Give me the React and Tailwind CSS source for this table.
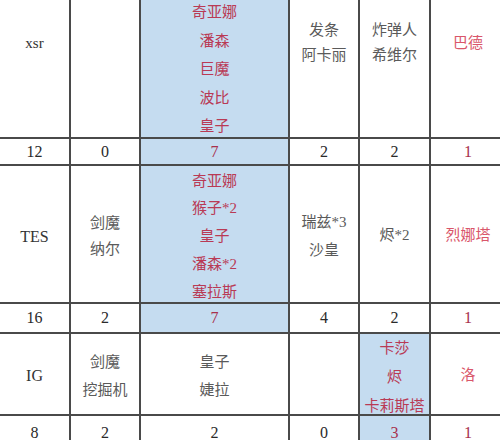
const BLUE = "bg-[#c5dcf0]";

function Cell({ children, blue, className = "" }) {
  return (
    <div
      className={`flex flex-col items-center justify-center text-center ${blue ? BLUE : "bg-white"} ${className}`}
    >
      {children}
    </div>
  );
}

function Lines({ items, tone = "gray", leading = "leading-[28px]" }) {
  const color =
    tone === "red" ? "text-[#b93a55]" : tone === "pink" ? "text-[#d9566a]" : "text-[#5a5a5a]";
  return (
    <div className={`${color} ${leading} text-[15px]`}>
      {items.map((t, i) => (
        <div key={i}>{t}</div>
      ))}
    </div>
  );
}

function Num({ children, red }) {
  return (
    <span className={`text-[16px] leading-none ${red ? "text-[#a8304d]" : "text-[#2a2a2a]"}`}>
      {children}
    </span>
  );
}

export default function App() {
  return (
    <div
      className="w-[500px] h-[440px] overflow-hidden bg-white"
      style={{ fontFamily: '"Liberation Serif", "Noto Sans CJK SC", serif' }}
    >
      <div className="grid w-[505px] grid-cols-[69px_68px_147px_68px_69px_74px] grid-rows-[137px_25px_136px_28px_80px_34px] gap-[2px] bg-[#4a4a4a]">
        {/* row 1 */}
        <Cell className="pb-[51px]">
          <span className="text-[15px] text-[#333]">xsr</span>
        </Cell>
        <Cell />
        <Cell blue className="pt-[2px]">
          <Lines tone="red" leading="leading-[28.5px]" items={["奇亚娜", "潘森", "巨魔", "波比", "皇子"]} />
        </Cell>
        <Cell className="pb-[51px]">
          <Lines leading="leading-[25px]" items={["发条", "阿卡丽"]} />
        </Cell>
        <Cell className="pb-[51px]">
          <Lines leading="leading-[25px]" items={["炸弹人", "希维尔"]} />
        </Cell>
        <Cell className="pb-[51px]">
          <Lines tone="pink" items={["巴德"]} />
        </Cell>

        {/* row 2 */}
        <Cell><Num>12</Num></Cell>
        <Cell><Num>0</Num></Cell>
        <Cell blue><Num red>7</Num></Cell>
        <Cell><Num>2</Num></Cell>
        <Cell><Num>2</Num></Cell>
        <Cell><Num red>1</Num></Cell>

        {/* row 3 */}
        <Cell className="pt-[5px]">
          <span className="text-[16px] text-[#333]">TES</span>
        </Cell>
        <Cell className="pt-[4px]">
          <Lines leading="leading-[26px]" items={["剑魔", "纳尔"]} />
        </Cell>
        <Cell blue className="pt-[6px]">
          <Lines tone="red" leading="leading-[27.75px]" items={["奇亚娜", "猴子*2", "皇子", "潘森*2", "塞拉斯"]} />
        </Cell>
        <Cell className="pt-[4px]">
          <Lines leading="leading-[28px]" items={["瑞兹*3", "沙皇"]} />
        </Cell>
        <Cell className="pt-[2px]">
          <Lines items={["烬*2"]} />
        </Cell>
        <Cell className="pt-[2px]">
          <Lines tone="pink" items={["烈娜塔"]} />
        </Cell>

        {/* row 4 */}
        <Cell><Num>16</Num></Cell>
        <Cell><Num>2</Num></Cell>
        <Cell blue><Num red>7</Num></Cell>
        <Cell><Num>4</Num></Cell>
        <Cell><Num>2</Num></Cell>
        <Cell><Num red>1</Num></Cell>

        {/* row 5 */}
        <Cell className="pt-[3px]">
          <span className="text-[16px] text-[#333]">IG</span>
        </Cell>
        <Cell className="pt-[4px]">
          <Lines leading="leading-[28px]" items={["剑魔", "挖掘机"]} />
        </Cell>
        <Cell className="pt-[4px]">
          <Lines leading="leading-[28px]" items={["皇子", "婕拉"]} />
        </Cell>
        <Cell />
        <Cell blue className="pt-[6px]">
          <Lines tone="red" leading="leading-[29px]" items={["卡莎", "烬", "卡莉斯塔"]} />
        </Cell>
        <Cell className="pt-[2px]">
          <Lines tone="pink" items={["洛"]} />
        </Cell>

        {/* row 6 */}
        <Cell><Num>8</Num></Cell>
        <Cell><Num>2</Num></Cell>
        <Cell><Num>2</Num></Cell>
        <Cell><Num>0</Num></Cell>
        <Cell blue><Num red>3</Num></Cell>
        <Cell><Num red>1</Num></Cell>
      </div>
    </div>
  );
}
